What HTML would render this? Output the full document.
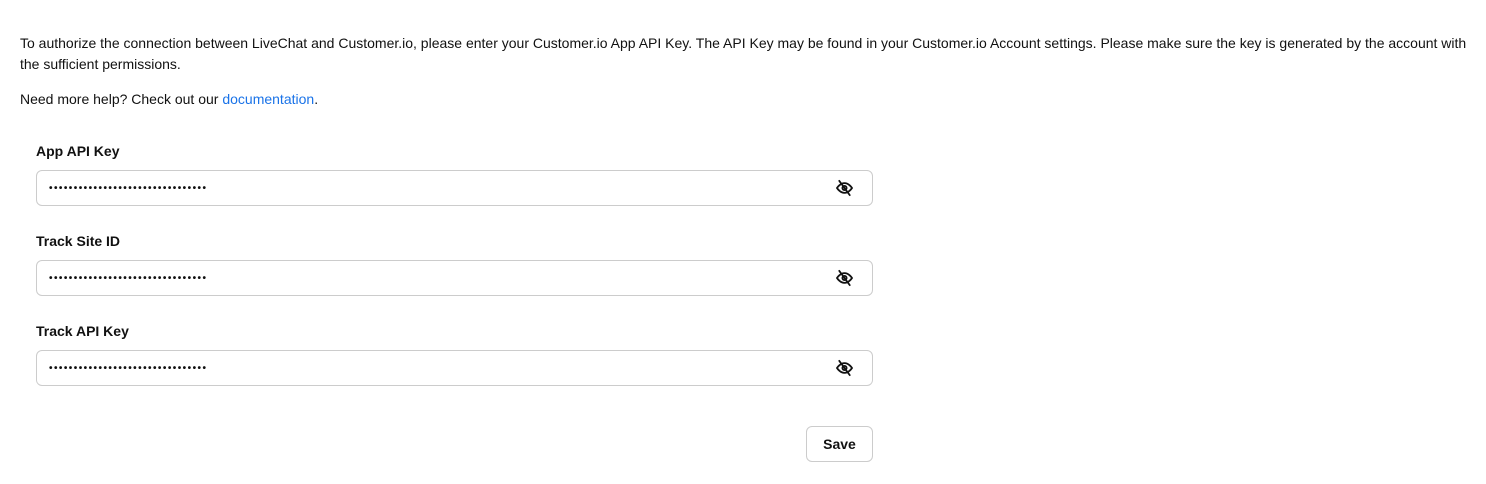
<!DOCTYPE html>
<html><head><style>
body{margin:0;width:1486px;height:484px;background:#fff;font-family:"Liberation Sans",sans-serif;color:#111;position:relative;overflow:hidden}
p{position:absolute;left:20px;margin:0;font-size:14px;line-height:21px;width:1450px}
a{color:#1a73e8;text-decoration:none}
.lab{position:absolute;left:36px;font-size:14px;font-weight:bold;line-height:20px}
.inp{position:absolute;left:36px;width:835px;height:34px;border:1px solid #ccc;border-radius:6px;box-sizing:content-box}
.dots{position:absolute;left:12px;top:1px;line-height:34px;font-size:10px;letter-spacing:1.45px;color:#111;font-weight:bold}
.inp svg{position:absolute;left:798px;top:8px}
.btn{position:absolute;left:806px;top:426px;width:65px;height:34px;border:1px solid #ccc;border-radius:6px;font-size:14px;font-weight:bold;text-align:center;line-height:34px}
</style></head><body>
<p style="top:33px">To authorize the connection between LiveChat and Customer.io, please enter your Customer.io App API Key. The API Key may be found in your Customer.io Account settings. Please make sure the key is generated by the account with the sufficient permissions.</p>
<p style="top:89px">Need more help? Check out our <a>documentation</a>.</p>
<div class="lab" style="top:141px">App API Key</div>
<div class="inp" style="top:170px"><span class="dots">••••••••••••••••••••••••••••••••</span><svg width="19" height="18" viewBox="0 0 24 24" fill="none" stroke="#111" stroke-width="2.4" stroke-linecap="round"><path d="M2 12s4-6.5 10-6.5 10 6.5 10 6.5-4 6.5-10 6.5S2 12 2 12z"/><circle cx="12" cy="12" r="2.8"/><path d="M5 2.5l14 19"/></svg></div>
<div class="lab" style="top:231px">Track Site ID</div>
<div class="inp" style="top:260px"><span class="dots">••••••••••••••••••••••••••••••••</span><svg width="19" height="18" viewBox="0 0 24 24" fill="none" stroke="#111" stroke-width="2.4" stroke-linecap="round"><path d="M2 12s4-6.5 10-6.5 10 6.5 10 6.5-4 6.5-10 6.5S2 12 2 12z"/><circle cx="12" cy="12" r="2.8"/><path d="M5 2.5l14 19"/></svg></div>
<div class="lab" style="top:321px">Track API Key</div>
<div class="inp" style="top:350px"><span class="dots">••••••••••••••••••••••••••••••••</span><svg width="19" height="18" viewBox="0 0 24 24" fill="none" stroke="#111" stroke-width="2.4" stroke-linecap="round"><path d="M2 12s4-6.5 10-6.5 10 6.5 10 6.5-4 6.5-10 6.5S2 12 2 12z"/><circle cx="12" cy="12" r="2.8"/><path d="M5 2.5l14 19"/></svg></div>
<div class="btn">Save</div>
</body></html>
